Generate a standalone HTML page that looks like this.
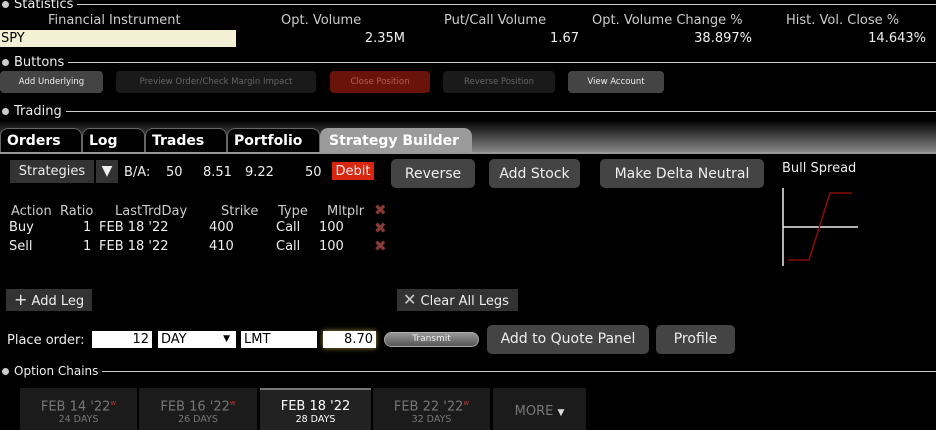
<!DOCTYPE html>
<html><head><meta charset="utf-8"><style>
*{margin:0;padding:0;box-sizing:border-box}
body{width:936px;height:430px;background:#000;color:#eee;font-family:"DejaVu Sans","Liberation Sans",sans-serif;font-size:13px;position:relative;overflow:hidden}
.a{position:absolute;white-space:nowrap}
.sec{position:absolute;left:0;width:936px;height:14px}
.sec .b{position:absolute;left:2px;top:3px;width:7px;height:7px;border-radius:50%;background:#ccc}
.sec .t{position:absolute;left:14px;top:-1px;font-size:13px;color:#eee;background:#000;padding-right:4px;z-index:1}
.sec .l{position:absolute;left:60px;right:0;top:6px;height:1px;background:#ccc}
.sb{position:absolute;top:71px;height:22px;border-radius:4px;font-size:8.5px;text-align:center;line-height:22px}
.btn{position:absolute;background:#444;border-radius:5px;text-align:center;color:#eee;font-size:14px}
.tab{position:absolute;top:128px;height:25px;border:1px solid #666;border-bottom:none;border-radius:8px 8px 0 0;font-weight:bold;font-size:14px;padding-left:6px;line-height:24px;background:#000;color:#fff}
.inp{position:absolute;top:331px;height:17px;background:#fff;color:#000;font-size:13px;line-height:17px;padding:0 3px}
.ct{position:absolute;top:388px;height:42px;background:#1b1b1b;text-align:center;color:#777;font-size:13px;padding-top:11px}
.ct small{display:block;font-size:9.5px;margin-top:0px}
.ct sup{color:#b33;font-size:7px}
.x{color:#8a3a35;font-weight:bold;font-size:15px}
</style></head><body>
<div class="sec" style="top:-2px"><div class="b"></div><div class="t">Statistics</div><div class="l"></div></div>
<div class="a" style="left:48px;top:13px;color:#ccc">Financial Instrument</div>
<div class="a" style="left:281px;top:13px;color:#ccc">Opt. Volume</div>
<div class="a" style="left:444px;top:13px;color:#ccc">Put/Call Volume</div>
<div class="a" style="left:592px;top:13px;color:#ccc">Opt. Volume Change %</div>
<div class="a" style="left:786px;top:13px;color:#ccc">Hist. Vol. Close %</div>
<div class="a" style="left:0;top:30px;width:236px;height:17px;background:#f3f0d6;color:#000;line-height:17px;padding-left:1px">SPY</div>
<div class="a" style="right:531px;top:31px">2.35M</div>
<div class="a" style="right:357px;top:31px">1.67</div>
<div class="a" style="right:184px;top:31px">38.897%</div>
<div class="a" style="right:10px;top:31px">14.643%</div>

<div class="sec" style="top:56px"><div class="b"></div><div class="t">Buttons</div><div class="l"></div></div>
<div class="sb" style="left:0;width:103px;background:#444;color:#eee">Add Underlying</div>
<div class="sb" style="left:116px;width:200px;background:#1a1a1a;color:#666">Preview Order/Check Margin Impact</div>
<div class="sb" style="left:330px;width:100px;background:#6a1409;color:#b06050">Close Position</div>
<div class="sb" style="left:443px;width:112px;background:#1a1a1a;color:#666">Reverse Position</div>
<div class="sb" style="left:568px;width:96px;background:#444;color:#eee">View Account</div>

<div class="sec" style="top:105px"><div class="b"></div><div class="t">Trading</div><div class="l"></div></div>
<div class="a" style="left:0;top:120px;width:936px;height:33px;background:linear-gradient(#000,#8a8a8a)"></div>
<div class="tab" style="left:0;width:82px">Orders</div>
<div class="tab" style="left:82px;width:63px">Log</div>
<div class="tab" style="left:145px;width:82px">Trades</div>
<div class="tab" style="left:227px;width:93px">Portfolio</div>
<div class="tab" style="left:320px;width:152px;background:#9b9b9b;border-color:#9b9b9b;color:#fff;padding-left:8px">Strategy Builder</div>
<div class="a" style="left:0;top:152px;width:936px;height:2px;background:#999"></div>

<div class="a" style="left:10px;top:160px;width:84px;height:23px;background:#333;text-align:center;line-height:24px">Strategies</div>
<div class="a" style="left:96px;top:160px;width:22px;height:23px;background:#333;text-align:center;line-height:22px;font-size:14px">▼</div>
<div class="a" style="left:124px;top:165px">B/A:</div>
<div class="a" style="left:166px;top:165px">50</div>
<div class="a" style="left:203px;top:165px">8.51</div>
<div class="a" style="left:245px;top:165px">9.22</div>
<div class="a" style="left:305px;top:165px">50</div>
<div class="a" style="left:332px;top:162px;width:42px;height:18px;background:#d8260f;text-align:center;line-height:19px">Debit</div>
<div class="btn" style="left:391px;top:159px;width:84px;height:29px;line-height:30px">Reverse</div>
<div class="btn" style="left:489px;top:159px;width:91px;height:29px;line-height:30px">Add Stock</div>
<div class="btn" style="left:600px;top:159px;width:164px;height:29px;line-height:30px">Make Delta Neutral</div>
<div class="a" style="left:782px;top:161px">Bull Spread</div>
<svg class="a" style="left:0;top:0" width="936" height="430"><g fill="none" stroke-width="1.5"><path d="M783 188V266M783 227H858" stroke="#eee"/><path d="M788 260H809L830 193H852" stroke="#8a0e06"/></g></svg>

<div class="a" style="left:11px;top:204px;color:#ccc">Action</div>
<div class="a" style="left:60px;top:204px;color:#ccc">Ratio</div>
<div class="a" style="left:115px;top:204px;color:#ccc">LastTrdDay</div>
<div class="a" style="left:221px;top:204px;color:#ccc">Strike</div>
<div class="a" style="left:278px;top:204px;color:#ccc">Type</div>
<div class="a" style="left:327px;top:204px;color:#ccc">Mltplr</div>
<div class="a x" style="left:374px;top:201px">✖</div>
<div class="a" style="left:9px;top:220px">Buy</div><div class="a" style="left:83px;top:220px">1</div><div class="a" style="left:99px;top:220px">FEB 18 '22</div><div class="a" style="left:209px;top:220px">400</div><div class="a" style="left:276px;top:220px">Call</div><div class="a" style="left:319px;top:220px">100</div><div class="a x" style="left:374px;top:219px">✖</div>
<div class="a" style="left:9px;top:239px">Sell</div><div class="a" style="left:83px;top:239px">1</div><div class="a" style="left:99px;top:239px">FEB 18 '22</div><div class="a" style="left:209px;top:239px">410</div><div class="a" style="left:276px;top:239px">Call</div><div class="a" style="left:319px;top:239px">100</div><div class="a x" style="left:374px;top:237px">✖</div>

<div class="a" style="left:6px;top:289px;width:86px;height:22px;background:#333;line-height:22px;padding-left:8px"><b style="font-size:16px;font-weight:normal">+</b> Add Leg</div>
<div class="a" style="left:397px;top:289px;width:121px;height:22px;background:#333;line-height:22px;padding-left:6px"><span style="color:#ccc;font-size:16px">✕</span> Clear All Legs</div>

<div class="a" style="left:7px;top:333px">Place order:</div>
<div class="inp" style="left:92px;width:60px;text-align:right">12</div>
<div class="inp" style="left:158px;width:78px">DAY<span style="position:absolute;right:6px;font-size:9px">▼</span></div>
<div class="inp" style="left:241px;width:76px">LMT</div>
<div class="inp" style="left:323px;width:53px;text-align:right;box-shadow:0 0 5px #a89040">8.70</div>
<div class="a" style="left:384px;top:332px;width:95px;height:15px;border-radius:8px;background:linear-gradient(#999,#555);border:1px solid #aaa;text-align:center;font-size:9px;line-height:13px;color:#eee">Transmit</div>
<div class="btn" style="left:487px;top:325px;width:162px;height:29px;line-height:29px">Add to Quote Panel</div>
<div class="btn" style="left:656px;top:325px;width:79px;height:29px;line-height:29px">Profile</div>

<div class="sec" style="top:365px"><div class="b"></div><div class="t" style="font-size:12px">Option Chains</div><div class="l" style="left:100px"></div></div>
<div class="ct" style="left:20px;width:117px">FEB 14 '22<sup>w</sup><small>24 DAYS</small></div>
<div class="ct" style="left:139px;width:118px">FEB 16 '22<sup>w</sup><small>26 DAYS</small></div>
<div class="ct" style="left:260px;width:111px;background:#222;color:#fff;border-top:2px solid #777;padding-top:9px">FEB 18 '22<small>28 DAYS</small></div>
<div class="ct" style="left:373px;width:117px">FEB 22 '22<sup>w</sup><small>32 DAYS</small></div>
<div class="ct" style="left:493px;width:93px;padding-top:16px">MORE <span style="font-size:9px;color:#ddd">▼</span></div>
</body></html>
